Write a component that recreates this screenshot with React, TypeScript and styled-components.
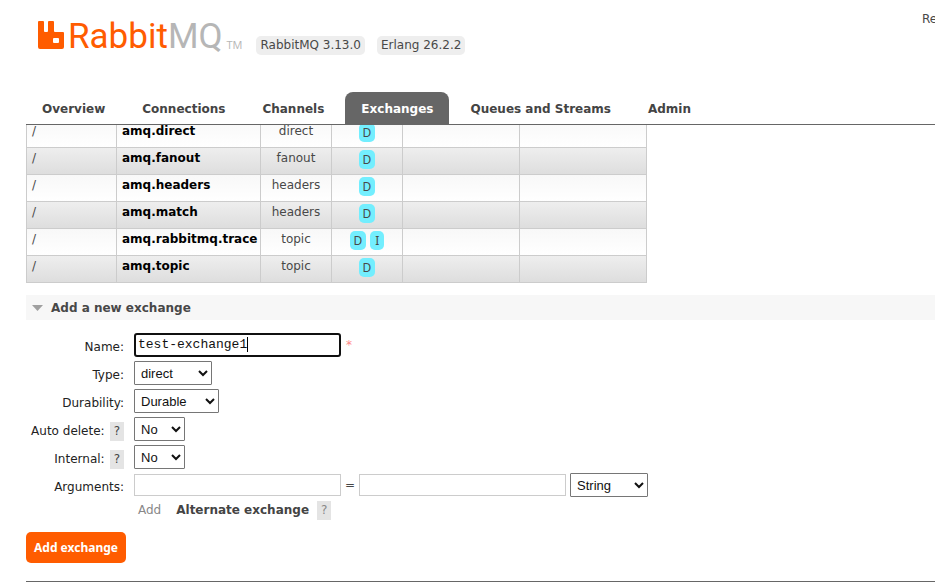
import React from "react";
import styled, { createGlobalStyle } from "styled-components";

const GlobalStyle = createGlobalStyle`
  * { box-sizing: border-box; }
  body {
    margin: 0;
    background: #fff;
    color: #484848;
    font: 12px/17px Verdana, "DejaVu Sans", sans-serif;
    overflow: hidden;
  }
`;

const Header = styled.header`
  padding-left: 26px;
`;

const Masthead = styled.div`
  display: flex;
  align-items: flex-start;
  height: 92px;
`;

const Logo = styled.a`
  display: flex;
  align-items: flex-start;
  margin: 17px 14px 0 12px;
  color: #ff5c00;
  text-decoration: none;
  font: 35px/40px Roboto, sans-serif;

  svg { margin: 4px 3px 0 0; }
`;

const LogoSuffix = styled.span`
  color: #b6b6b6;
`;

const TradeMark = styled.span`
  margin: 20px 0 0 4px;
  color: #b6b6b6;
  font: 11px/16px "Open Sans", sans-serif;
`;

const Versions = styled.div`
  display: flex;
  gap: 12px;
  margin-top: 36px;
`;

const Version = styled.span`
  padding: 1px 4px;
  border-radius: 5px;
  background: #eee;
`;

const Refresh = styled.span`
  width: 13px;
  margin: 11px 0 0 auto;
`;

const Tabs = styled.nav`
  display: flex;
  gap: 5px;
  height: 33px;
  border-bottom: 1px solid #666;
`;

const Tab = styled.a<{ $active?: boolean }>`
  padding: 9px 16px 6px;
  border-radius: 8px 8px 0 0;
  background: ${(p) => (p.$active ? "#666" : "transparent")};
  color: ${(p) => (p.$active ? "#fff" : "#444")};
  font-weight: bold;
  text-decoration: none;
  white-space: nowrap;
`;

const Main = styled.main`
  padding-left: 26px;
  overflow: hidden;
`;

const ExchangeTable = styled.table`
  width: 621px;
  margin: -5px 0 12px;
  border-collapse: collapse;
  table-layout: fixed;
`;

const Row = styled.tr`
  height: 27px;
  background: linear-gradient(#f8f8f8, #fff);
  &:nth-child(even) { background: linear-gradient(#eee, #ddd); }
`;

const Cell = styled.td<{ $center?: boolean }>`
  height: 27px;
  padding: 2px 5px 6px;
  border: 1px solid #ccc;
  text-align: ${(p) => (p.$center ? "center" : "left")};
  vertical-align: top;
  white-space: nowrap;
`;

const FeatureCell = styled(Cell)`
  padding: 2px 5px 5px;
`;

const Features = styled.div`
  display: flex;
  justify-content: center;
  gap: 4px;
`;

const Feature = styled.abbr`
  min-width: 14px;
  height: 19px;
  padding: 1px 4px;
  border-radius: 5px;
  background: #73eefe;
  font-family: Verdana, "Noto Sans", sans-serif;
  text-align: center;
`;

const ExchangeLink = styled.a`
  color: #000;
  font-weight: bold;
  text-decoration: none;
`;

const SectionTitle = styled.h2`
  display: flex;
  align-items: center;
  gap: 8px;
  height: 25px;
  margin: 0 0 13px;
  padding: 1px 0 0 6px;
  background: #f7f7f7;
  font-size: 12px;
  line-height: 17px;
`;

const Form = styled.form`
  padding-bottom: 18px;
  border-bottom: 1px solid #666;
`;

const Fields = styled.div`
  display: grid;
  grid-template-columns: 98px 1fr;
  gap: 4px 10px;
`;

const FieldLabel = styled.div`
  display: flex;
  align-items: center;
  justify-content: flex-end;
  gap: 5px;
  height: 24px;
  padding-top: 5px;
  color: #222;
  white-space: nowrap;
`;

const Controls = styled.div`
  display: flex;
  align-items: center;
  gap: 5px;
  height: 24px;
`;

const ArgumentControls = styled(Controls)`
  gap: 4px;
`;

const TextBox = styled.input`
  width: 207px;
  height: 22px;
  padding: 0 3px;
  border: 1px solid #ccc;
  outline: none;
  color: #111;
  font: 13px/18px "Courier New", "Liberation Mono", monospace;
`;

const NameField = styled.div`
  position: relative;
  display: flex;
`;

const NameBox = styled(TextBox)`
  height: 24px;
  padding: 0 2px 1px;
  border: 2px solid #101010;
  border-radius: 3px;
  caret-color: transparent;
`;

const Caret = styled.span`
  position: absolute;
  top: 4px;
  left: 113px;
  width: 1px;
  height: 15px;
  background: #000;
`;

const Mandatory = styled.span`
  color: #f88;
`;

const widths = { small: 51, medium: 78, large: 85 };

const Select = styled.select<{ $size: keyof typeof widths }>`
  width: ${(p) => widths[p.$size]}px;
  height: 24px;
  padding: 0 2px;
  border: 1px solid #767676;
  border-radius: 1px;
  background: #fff;
  color: #111;
  font: 13px "Liberation Sans", Arial, sans-serif;
`;

const Help = styled.button<{ $muted?: boolean }>`
  height: 19px;
  padding: 0 4px;
  border: 0;
  background: #e4e4e4;
  color: ${(p) => (p.$muted ? "#888" : "#444")};
  font: inherit;
`;

const Shortcuts = styled.div`
  display: flex;
  align-items: center;
  grid-column: 2;
  gap: 8px;
  padding-left: 4px;
  color: #888;
`;

const ShortcutLink = styled.a`
  margin-left: 7px;
  color: #444;
  font-weight: bold;
  text-decoration: none;
`;

const Submit = styled.button`
  height: 31px;
  margin-top: 12px;
  padding: 0 8px;
  border: 0;
  border-radius: 5px;
  background: #ff5c00;
  color: #fff;
  font: bold 12px/17px "Noto Sans", sans-serif;
`;

const tabs = ["Overview", "Connections", "Channels", "Exchanges", "Queues and Streams", "Admin"];

const exchanges = [
  { name: "amq.direct", type: "direct", features: ["D"] },
  { name: "amq.fanout", type: "fanout", features: ["D"] },
  { name: "amq.headers", type: "headers", features: ["D"] },
  { name: "amq.match", type: "headers", features: ["D"] },
  { name: "amq.rabbitmq.trace", type: "topic", features: ["D", "I"] },
  { name: "amq.topic", type: "topic", features: ["D"] },
];

const selects: { id: string; label: string; value: string; size: keyof typeof widths; help?: boolean }[] = [
  { id: "type", label: "Type:", value: "direct", size: "medium" },
  { id: "durability", label: "Durability:", value: "Durable", size: "large" },
  { id: "auto-delete", label: "Auto delete:", value: "No", size: "small", help: true },
  { id: "internal", label: "Internal:", value: "No", size: "small", help: true },
];

export default function App() {
  return (
    <>
      <GlobalStyle />
      <Header>
        <Masthead>
          <Logo href="#">
            <svg width="27" height="28" viewBox="0 0 27 28" fill="currentColor" aria-hidden="true">
              <path fillRule="evenodd" d="M1 0H5Q6 0 6 1V10Q6 11 7 11H9Q10 11 10 10V1Q10 0 11 0H15Q16 0 16 1V10Q16 11 17 11H25Q26 11 26 12V26Q26 28 24 28H2Q0 28 0 26V1Q0 0 1 0ZM16 17Q15 17 15 18V21Q15 22 16 22H20Q21 22 21 21V18Q21 17 20 17Z" />
            </svg>
            <span>Rabbit</span>
            <LogoSuffix>MQ</LogoSuffix>
            <TradeMark>TM</TradeMark>
          </Logo>
          <Versions>
            <Version>RabbitMQ 3.13.0</Version>
            <Version>Erlang 26.2.2</Version>
          </Versions>
          <Refresh>Re</Refresh>
        </Masthead>
        <Tabs>
          {tabs.map((t) => (
            <Tab key={t} href="#" $active={t === "Exchanges"}>{t}</Tab>
          ))}
        </Tabs>
      </Header>
      <Main>
        <ExchangeTable>
          <colgroup>
            <col width="90" /><col width="144" /><col width="71" /><col width="71" /><col width="117" /><col width="127" />
          </colgroup>
          <tbody>
            {exchanges.map((x) => (
              <Row key={x.name}>
                <Cell>/</Cell>
                <Cell><ExchangeLink href="#">{x.name}</ExchangeLink></Cell>
                <Cell $center>{x.type}</Cell>
                <FeatureCell>
                  <Features>{x.features.map((f) => <Feature key={f}>{f}</Feature>)}</Features>
                </FeatureCell>
                <Cell />
                <Cell />
              </Row>
            ))}
          </tbody>
        </ExchangeTable>
        <SectionTitle>
          <svg width="11" height="6" viewBox="0 0 11 6" aria-hidden="true"><path d="M0 0H11L5.500 6Z" fill="#a0a0a0" /></svg>
          Add a new exchange
        </SectionTitle>
        <Form onSubmit={(e) => e.preventDefault()}>
          <Fields>
            <FieldLabel><label htmlFor="name">Name:</label></FieldLabel>
            <Controls>
              <NameField>
                <NameBox id="name" autoFocus defaultValue="test-exchange1" spellCheck={false} />
                <Caret />
              </NameField>
              <Mandatory>*</Mandatory>
            </Controls>
            {selects.map((s) => (
              <React.Fragment key={s.id}>
                <FieldLabel>
                  <label htmlFor={s.id}>{s.label}</label>
                  {s.help && <Help type="button">?</Help>}
                </FieldLabel>
                <Controls>
                  <Select id={s.id} $size={s.size}><option>{s.value}</option></Select>
                </Controls>
              </React.Fragment>
            ))}
            <FieldLabel><label htmlFor="arg-key">Arguments:</label></FieldLabel>
            <ArgumentControls>
              <TextBox id="arg-key" />
              =
              <TextBox aria-label="Argument value" />
              <Select aria-label="Argument type" $size="medium"><option>String</option></Select>
            </ArgumentControls>
            <Shortcuts>
              Add
              <ShortcutLink href="#">Alternate exchange</ShortcutLink>
              <Help type="button" $muted>?</Help>
            </Shortcuts>
          </Fields>
          <Submit type="submit">Add exchange</Submit>
        </Form>
      </Main>
    </>
  );
}
